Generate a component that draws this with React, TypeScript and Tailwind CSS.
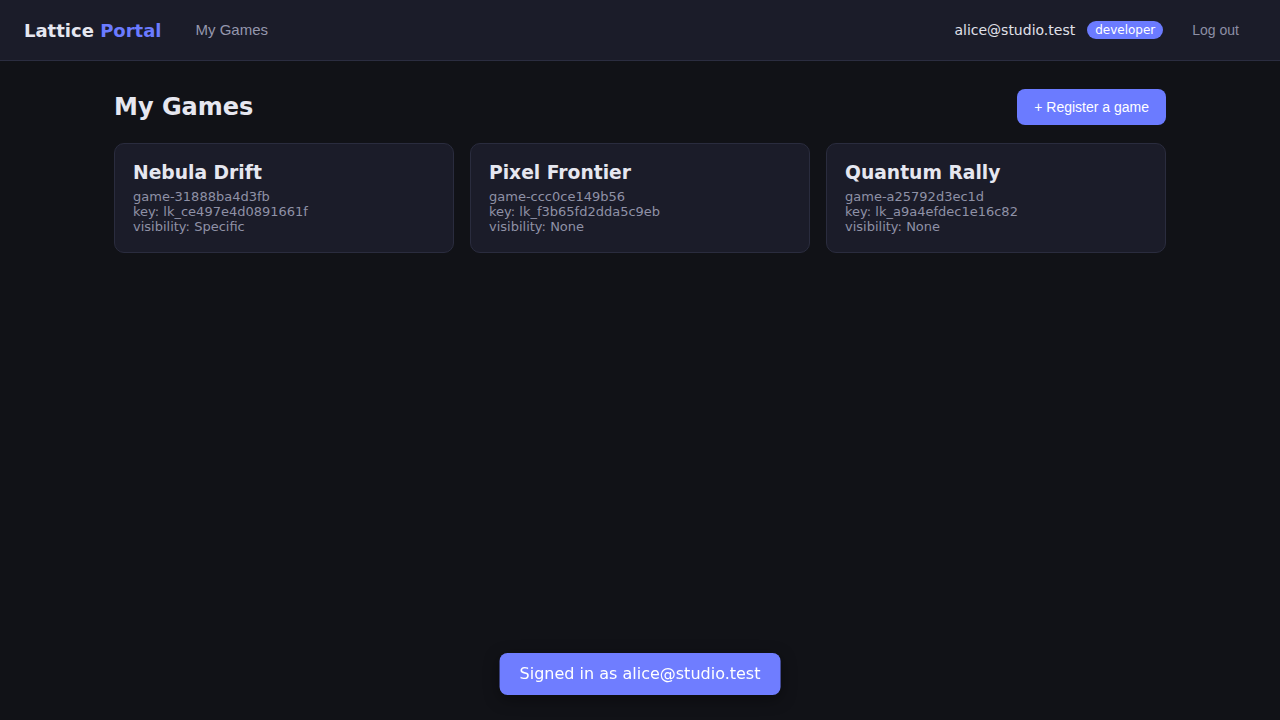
import React from "react";

const games = [
  { name: "Nebula Drift", id: "game-31888ba4d3fb", key: "lk_ce497e4d0891661f", vis: "Specific" },
  { name: "Pixel Frontier", id: "game-ccc0ce149b56", key: "lk_f3b65fd2dda5c9eb", vis: "None" },
  { name: "Quantum Rally", id: "game-a25792d3ec1d", key: "lk_a9a4efdec1e16c82", vis: "None" },
];

export default function App() {
  return (
    <div
      className="min-h-[720px] bg-[#111217] text-[#e6e7f0] flex flex-col"
      style={{ fontFamily: '"DejaVu Sans", sans-serif' }}
    >
      <header className="h-[61px] bg-[#1b1c29] border-b border-[#2b2d40] flex items-center justify-between pl-6 pr-6">
        <div className="flex items-center">
          <div className="text-[18px] font-bold text-[#e6e7f0]">
            Lattice <span className="text-[#6b7bff]">Portal</span>
          </div>
          <a className="ml-[34px] text-[15px] text-[#9597ad] font-['Liberation_Sans',sans-serif]">My Games</a>
        </div>
        <div className="flex items-center">
          <span className="text-[14px] text-[#e0e1ea]">alice@studio.test</span>
          <span className="ml-3 h-[18px] px-2 rounded-full bg-[#6b7bff] text-white text-[12px] leading-[18px]">developer</span>
          <button className="ml-3 px-[17px] py-1 text-[14px] text-[#8d8fa5] font-['Liberation_Sans',sans-serif]">Log out</button>
        </div>
      </header>
      <main className="w-full max-w-[1100px] mx-auto px-6 pt-7 flex-1">
        <div className="flex items-center justify-between">
          <h1 className="text-[24px] font-bold text-[#e6e7f0]">My Games</h1>
          <button className="h-9 px-[17px] rounded-lg bg-[#6b7bff] text-white text-[14px] font-['Liberation_Sans',sans-serif]">
            + Register a game
          </button>
        </div>
        <div className="grid grid-cols-3 gap-4 mt-[18px]">
          {games.map((g) => (
            <div key={g.id} className="h-[110px] rounded-[10px] border border-[#2a2c3e] bg-[#1b1c29] px-[18px] pt-[15px]">
              <div className="text-[18.72px] font-bold text-[#e6e7f0] leading-[28px]">{g.name}</div>
              <div className="mt-[2px] text-[13px] leading-[15px] text-[#8f91a6]">
                <div>{g.id}</div>
                <div>key: {g.key}</div>
                <div>visibility: {g.vis}</div>
              </div>
            </div>
          ))}
        </div>
      </main>
      <div className="fixed left-1/2 -translate-x-1/2 bottom-[25px] h-[42px] px-5 rounded-lg bg-[#6f7dff] text-white text-[16px] flex items-center shadow-[0_4px_16px_rgba(0,0,0,0.4)]">
        Signed in as alice@studio.test
      </div>
    </div>
  );
}
